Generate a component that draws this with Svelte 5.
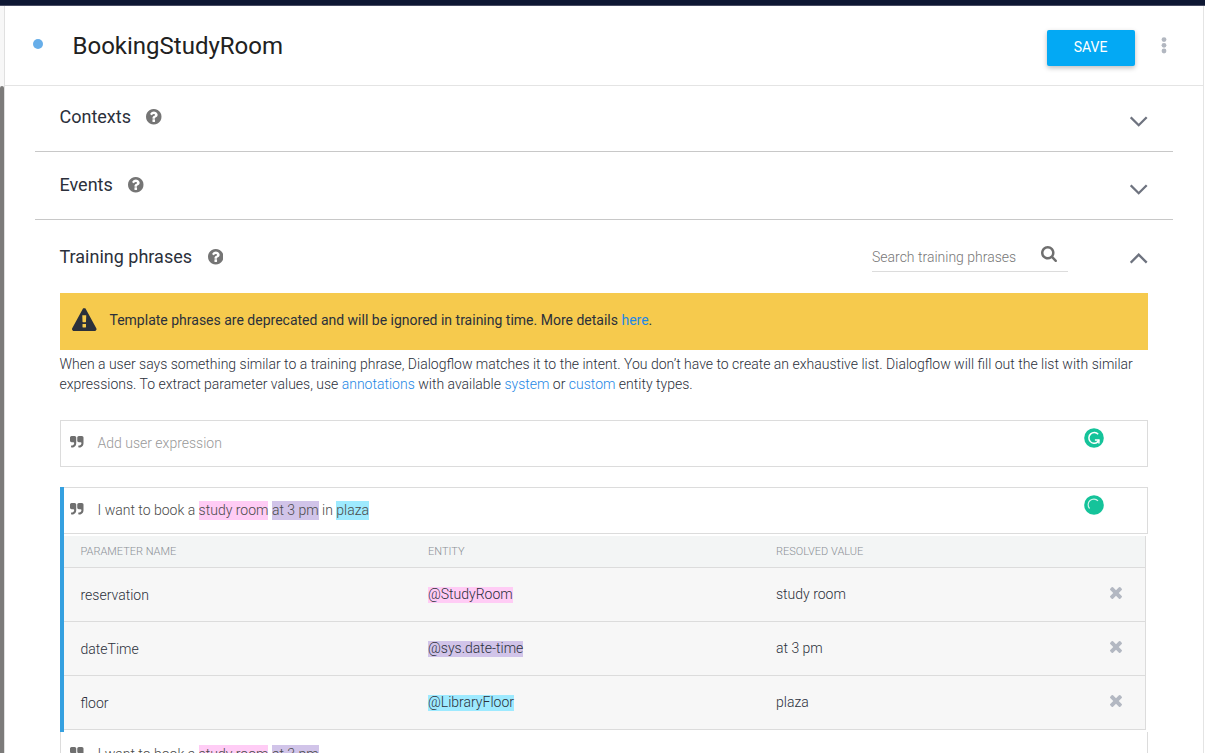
<script>
  const params = [
    { name: 'reservation', entity: '@StudyRoom', tone: 'pink', value: 'study room' },
    { name: 'dateTime', entity: '@sys.date-time', tone: 'violet', value: 'at 3 pm' },
    { name: 'floor', entity: '@LibraryFloor', tone: 'cyan', value: 'plaza' }
  ];
</script>

{#snippet help()}
  <svg class="help" viewBox="128 128 1536 1536"><path d="M1024 1376v-192q0-14-9-23t-23-9h-192q-14 0-23 9t-9 23v192q0 14 9 23t23 9h192q14 0 23-9t9-23zm256-672q0-88-55.5-163t-138.5-116-170-41q-243 0-371 213-15 24 8 42l132 100q7 6 19 6 16 0 25-12 53-68 86-92 34-24 86-24 48 0 85.5 26t37.5 59q0 38-20 61t-68 45q-63 28-115.5 86.5t-52.5 125.5v36q0 14 9 23t23 9h192q14 0 23-9t9-23q0-19 21.5-49.5t54.5-49.5q32-18 49-28.5t46-35 44.5-48 28-60.5 12.5-81zm384 192q0 209-103 385.5t-279.5 279.5-385.5 103-385.5-103-279.5-279.5-103-385.5 103-385.5 279.5-279.5 385.5-103 385.5 103 279.5 279.5 103 385.5z" /></svg>
{/snippet}

{#snippet chevron(up)}
  <svg class="chevron" class:up viewBox="0 0 18 11"><path d="M.7 1.2 8.7 9.2 16.7 1.2" /></svg>
{/snippet}

{#snippet quote()}
  <svg class="quote" viewBox="64 128 1664 1408"><path d="M832 320v704q0 104-40.5 198.5t-109.5 163.5-163.5 109.5-198.5 40.5h-64q-26 0-45-19t-19-45v-128q0-26 19-45t45-19h64q106 0 181-75t75-181v-32q0-40-28-68t-68-28h-224q-80 0-136-56t-56-136v-384q0-80 56-136t136-56h384q80 0 136 56t56 136zm896 0v704q0 104-40.5 198.5t-109.5 163.5-163.5 109.5-198.5 40.5h-64q-26 0-45-19t-19-45v-128q0-26 19-45t45-19h64q106 0 181-75t75-181v-32q0-40-28-68t-68-28h-224q-80 0-136-56t-56-136v-384q0-80 56-136t136-56h384q80 0 136 56t56 136z" /></svg>
{/snippet}

<div class="screen">
  <div class="topbar"></div>
  <div class="body">
    <div class="rail"><div class="thumb"></div></div>
    <main>
      <header>
        <span class="dot"></span>
        <h1>BookingStudyRoom</h1>
        <button class="save">SAVE</button>
        <svg class="more" viewBox="0 0 6 17"><circle cx="3" cy="2.6" r="2.4" /><circle cx="3" cy="8.3" r="2.4" /><circle cx="3" cy="14" r="2.4" /></svg>
      </header>

      <section class="fold">
        <h2>Contexts</h2>{@render help()}{@render chevron(false)}
      </section>
      <section class="fold">
        <h2>Events</h2>{@render help()}{@render chevron(false)}
      </section>

      <section class="phrases">
        <div class="heading">
          <h2>Training phrases</h2>{@render help()}
          <div class="search">
            <span>Search training phrases</span>
            <svg viewBox="64 128 1664 1664"><path d="M1216 832q0-185-131.5-316.5t-316.5-131.5-316.5 131.5-131.5 316.5 131.5 316.5 316.5 131.5 316.5-131.5 131.5-316.5zm512 832q0 52-38 90t-90 38q-54 0-90-38l-343-342q-179 124-399 124-143 0-273.5-55.5t-225-150-150-225-55.5-273.5 55.5-273.5 150-225 225-150 273.5-55.5 273.5 55.5 225 150 150 225 55.5 273.5q0 220-124 399l343 343q37 37 37 90z" /></svg>
          </div>
          {@render chevron(true)}
        </div>

        <div class="banner">
          <svg viewBox="0 0 1792 1664"><path d="M1024 1375v-190q0-14-9.5-23.5t-22.5-9.5h-192q-13 0-22.5 9.5t-9.5 23.5v190q0 14 9.5 23.5t22.5 9.5h192q13 0 22.5-9.5t9.5-23.5zm-2-374l18-459q0-12-10-19-13-11-24-11h-220q-11 0-24 11-10 7-10 21l17 457q0 10 10 16.5t24 6.5h185q14 0 23.5-6.5t10.5-16.5zm-14-934l768 1408q35 63-2 126-17 29-46.5 46t-63.5 17h-1536q-34 0-63.5-17t-46.5-46q-37-63-2-126l768-1408q17-31 47-49t65-18 65 18 47 49z" /></svg>
          <span>Template phrases are deprecated and will be ignored in training time. More details <a href="#here">here</a>.</span>
        </div>

        <p>
          When a user says something similar to a training phrase, Dialogflow matches it to the intent. You don’t have to create an exhaustive list. Dialogflow will fill out the list with similar<br />
          expressions. To extract parameter values, use <a href="#annotations">annotations</a> with available <a href="#system">system</a> or <a href="#custom">custom</a> entity types.
        </p>

        <div class="entry add">
          {@render quote()}
          <span class="placeholder">Add user expression</span>
          <svg class="checker" viewBox="0 0 20 20"><circle class="disc" cx="10" cy="10" r="9.8" /><path d="M14.2 6.2A5.4 5.4 0 1 0 13.6 14.2" /><path d="M10.9 12.1H14.9V15.6" /><path d="M14.9 12.1 13 14.4" /></svg>
        </div>

        <div class="selected">
          <div class="entry">
            {@render quote()}
            <span class="expression">I want to book a <mark class="pink">study room</mark> <mark class="violet">at 3 pm</mark> in <mark class="cyan">plaza</mark></span>
            <svg class="checker" viewBox="0 0 20 20"><circle class="disc" cx="10" cy="10" r="9.8" /><path class="spin" d="M5.6 13.5A5.4 5.4 0 0 1 14 5.9" /></svg>
          </div>
          <div class="params">
            <div class="row head"><span>PARAMETER NAME</span><span>ENTITY</span><span>RESOLVED VALUE</span></div>
            {#each params as item}
              <div class="row">
                <span class="name">{item.name}</span>
                <span><mark class={item.tone}>{item.entity}</mark></span>
                <span>{item.value}</span>
                <svg class="remove" viewBox="302 366 1188 1188"><path d="M1490 1322q0 40-28 68l-136 136q-28 28-68 28t-68-28l-294-294-294 294q-28 28-68 28t-68-28l-136-136q-28-28-28-68t28-68l294-294-294-294q-28-28-28-68t28-68l136-136q28-28 68-28t68 28l294 294 294-294q28-28 68-28t68 28l136 136q28 28 28 68t-28 68l-294 294 294 294q28 28 28 68z" /></svg>
              </div>
            {/each}
          </div>
        </div>

        <div class="entry next">
          {@render quote()}
          <span class="expression">I want to book a <mark class="pink">study room</mark> <mark class="violet">at 3 pm</mark></span>
        </div>
      </section>
    </main>
  </div>
</div>

<style>
  :global(body) { margin: 0; overflow: hidden; }
  .screen, .screen * { box-sizing: border-box; }
  .screen {
    width: 1205px; height: 753px; overflow: hidden;
    display: flex; flex-direction: column;
    font: 300 14px/20px Roboto, sans-serif; color: #2b303b; background: #fff;
  }
  svg { display: block; flex: none; }
  a { color: #1e88e5; text-decoration: none; }
  h1, h2, p { margin: 0; }
  .topbar { height: 6px; flex: none; background: #0e1733; border-bottom: 1px solid #484c63; }
  .body { display: flex; flex: 1; min-height: 0; }
  .rail { width: 5px; flex: none; padding-top: 80px; background: #f7f7f7; border-right: 1px solid #e0e0e0; }
  .thumb { height: 700px; background: #7c7b7a; border-radius: 2px 2px 0 0; }
  main { width: 1199px; flex: none; border-right: 1px solid #e4e4e4; overflow: hidden; }

  header { height: 80px; display: flex; align-items: flex-start; border-bottom: 1px solid #e4e4e4; padding: 0 36px 0 28px; }
  .dot { width: 10px; height: 10px; margin-top: 33px; border-radius: 50%; background: #67aee9; }
  h1 { margin: 24px auto 0 29.5px; font-size: 24px; line-height: 32px; font-weight: 400; color: #212121; }
  .save {
    width: 88px; height: 36px; margin-top: 24px; padding: 0 1px 2px 0; border: 0; border-radius: 2px;
    background: #03a9f4; color: #fff; font: 400 14px/34px Roboto, sans-serif;
    box-shadow: 0 2px 5px rgba(0, 0, 0, 0.26);
  }
  .more { width: 6px; height: 17px; margin: 31px 0 0 26px; fill: #b2b7c0; }

  .fold { height: 66px; margin: 0 30px; padding: 0 25px 0 24.5px; display: flex; border-bottom: 1px solid #c8c8c8; }
  .fold + .fold { height: 68px; }
  .fold h2 { margin-top: 18px; }
  .fold .help { margin-top: 23px; }
  .fold .chevron { margin-top: 30px; }
  .fold + .fold h2 { margin-top: 20px; }
  .fold + .fold .help { margin-top: 25px; }
  .fold + .fold .chevron { margin-top: 32px; }
  h2 { font-size: 18px; line-height: 26px; font-weight: 400; color: #2b303b; }
  .help { width: 15.5px; height: 15.5px; margin-left: 15.5px; fill: #757575; }
  .chevron { width: 18px; height: 11px; margin-left: auto; fill: none; stroke: #6e737f; stroke-width: 2.3; }
  .up path { transform: translate(17.4px, 10.8px) rotate(180deg); }

  .phrases { margin: 0 55px; }
  .heading { height: 73px; display: flex; }
  .heading h2 { margin: 24px 0 0 -0.5px; }
  .heading .help { margin-top: 29px; }
  .heading .chevron { margin: 33px 0 0 62px; }
  .search { width: 196px; height: 32px; margin: 20px 0 0 auto; padding-top: 7px; display: flex; justify-content: space-between; border-bottom: 1px solid #dcdcdc; color: #777; }
  .search svg { width: 16px; height: 16px; margin: -1px 11.5px 0 0; fill: #6f6f6f; }

  .banner { height: 57px; display: flex; padding-left: 12.3px; background: #f6ca4d; font-weight: 400; }
  .banner svg { width: 24.5px; height: 23px; margin: 15px 12.7px 0 0; fill: #2b303b; }
  .banner span { margin-top: 17px; }
  .phrases p { margin: 4px 0 26px -0.6px; white-space: nowrap; }

  .entry { height: 47px; display: flex; border: 1px solid #dcdcdc; padding: 0 43px 0 9px; background: #fff; }
  .quote { width: 13.5px; height: 11.5px; margin: 15px 14px 0 0; fill: #6f6f6f; }
  .placeholder { margin-top: 12px; color: #999; }
  .expression { margin-top: 12px; color: #4a4a4a; }
  .checker { width: 20px; height: 20px; margin: 7px 0 0 auto; fill: none; stroke: #fff; stroke-width: 1.5; }
  .disc { fill: #15c39a; stroke: none; }
  .spin { stroke-width: 1.2; opacity: 0.8; }
  mark { display: inline-block; line-height: 16px; color: inherit; }
  .row mark { height: 16px; line-height: 14px; margin-top: 3px; vertical-align: top; }
  .expression mark { line-height: 19px; }
  .pink { background: #ffccf5; }
  .violet { background: #d1c4e9; }
  .cyan { background: #9eeaff; }

  .selected { margin-top: 20px; height: 245px; border-left: 4px solid #35a0e0; }
  .selected .entry { border-left: 0; padding-left: 6px; }
  .params { margin: 2px 2px 0 0; border-right: 1px solid #dcdcdc; }
  .row { height: 54px; display: grid; grid-template-columns: 347.5px 348px 1fr 12px; align-items: start; padding: 16px 23px 0 16.5px; border-bottom: 1px solid #dcdcdc; background: #f7f7f7; }
  .name { padding-top: 1px; }
  .head { height: 32px; padding-top: 6px; background: #f3f5f5; color: #8b9096; font-size: 11px; }
  .remove { width: 12px; height: 12px; margin-top: 3px; fill: #b3b8c2; }
  .next { border-top: 0; padding-top: 0; }
</style>
